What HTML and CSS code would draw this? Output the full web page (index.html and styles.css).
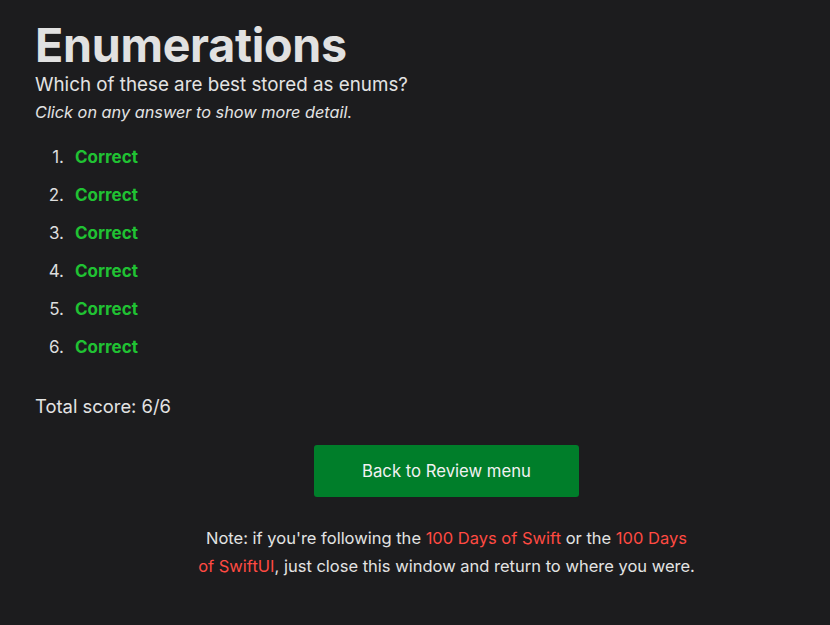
FILE: index.html
```html
<!DOCTYPE html>
<html>
<head>
<meta charset="utf-8">
<link rel="stylesheet" href="styles.css">
</head>
<body>
<main class="page">
  <h1 class="title">Enumerations</h1>
  <p class="question">Which of these are best stored as enums?</p>
  <p class="hint">Click on any answer to show more detail.</p>
  <ol class="answers">
    <li><span class="correct">Correct</span></li>
    <li><span class="correct">Correct</span></li>
    <li><span class="correct">Correct</span></li>
    <li><span class="correct">Correct</span></li>
    <li><span class="correct">Correct</span></li>
    <li><span class="correct">Correct</span></li>
  </ol>
  <p class="score">Total score: 6/6</p>
  <div class="actions">
    <a class="button" href="#">Back to Review menu</a>
  </div>
  <p class="note"><span>Note: if you're following the <a href="#">100 Days of Swift</a> or the <a href="#">100 Days</a></span><br><span><a href="#">of SwiftUI</a>, just close this window and return to where you were.</span></p>
</main>
</body>
</html>
```

FILE: styles.css
```css
html, body {
  margin: 0;
  padding: 0;
  background: #1c1c1e;
  color: #e3e3e3;
  font-family: Inter, "Noto Sans", sans-serif;
}

.page {
  width: 823px;
  padding: 14px 0 0 35px;
  box-sizing: content-box;
}

.title {
  margin: 0;
  font-size: 46.6px;
  font-weight: 700;
  line-height: 62px;
  color: #e1e1e1;
  letter-spacing: -0.3px;
}

.question {
  margin: 0;
  font-size: 18.8px;
  line-height: 22px;
  margin-top: -2px;
}

.hint {
  margin: 6px 0 0;
  font-size: 16.3px;
  font-style: italic;
  line-height: 20px;
}

.answers {
  list-style: none;
  counter-reset: item;
  margin: 25px 0 0;
  padding: 0;
  font-size: 17px;
  line-height: 20px;
}

.answers li {
  counter-increment: item;
  display: flex;
  margin-bottom: 18px;
}

.answers li::before {
  content: counter(item) ".";
  width: 29px;
  margin-right: 11px;
  text-align: right;
  color: #dedede;
}

.correct {
  color: #20c233;
  font-weight: 700;
}

.score {
  margin: 38px 0 0;
  font-size: 18.4px;
  line-height: 22px;
}

.actions {
  display: flex;
  justify-content: center;
  margin-top: 28px;
}

.button {
  display: flex;
  align-items: center;
  justify-content: center;
  width: 265px;
  height: 52px;
  background: #007e2a;
  color: #f2f2f2;
  border-radius: 3px;
  text-decoration: none;
  font-size: 16.7px;
}

.note {
  width: 520px;
  margin: 27px auto 0;
  text-align: center;
  font-size: 16.5px;
  line-height: 28px;
}

.note a {
  color: #ff4a42;
  text-decoration: none;
}
```
